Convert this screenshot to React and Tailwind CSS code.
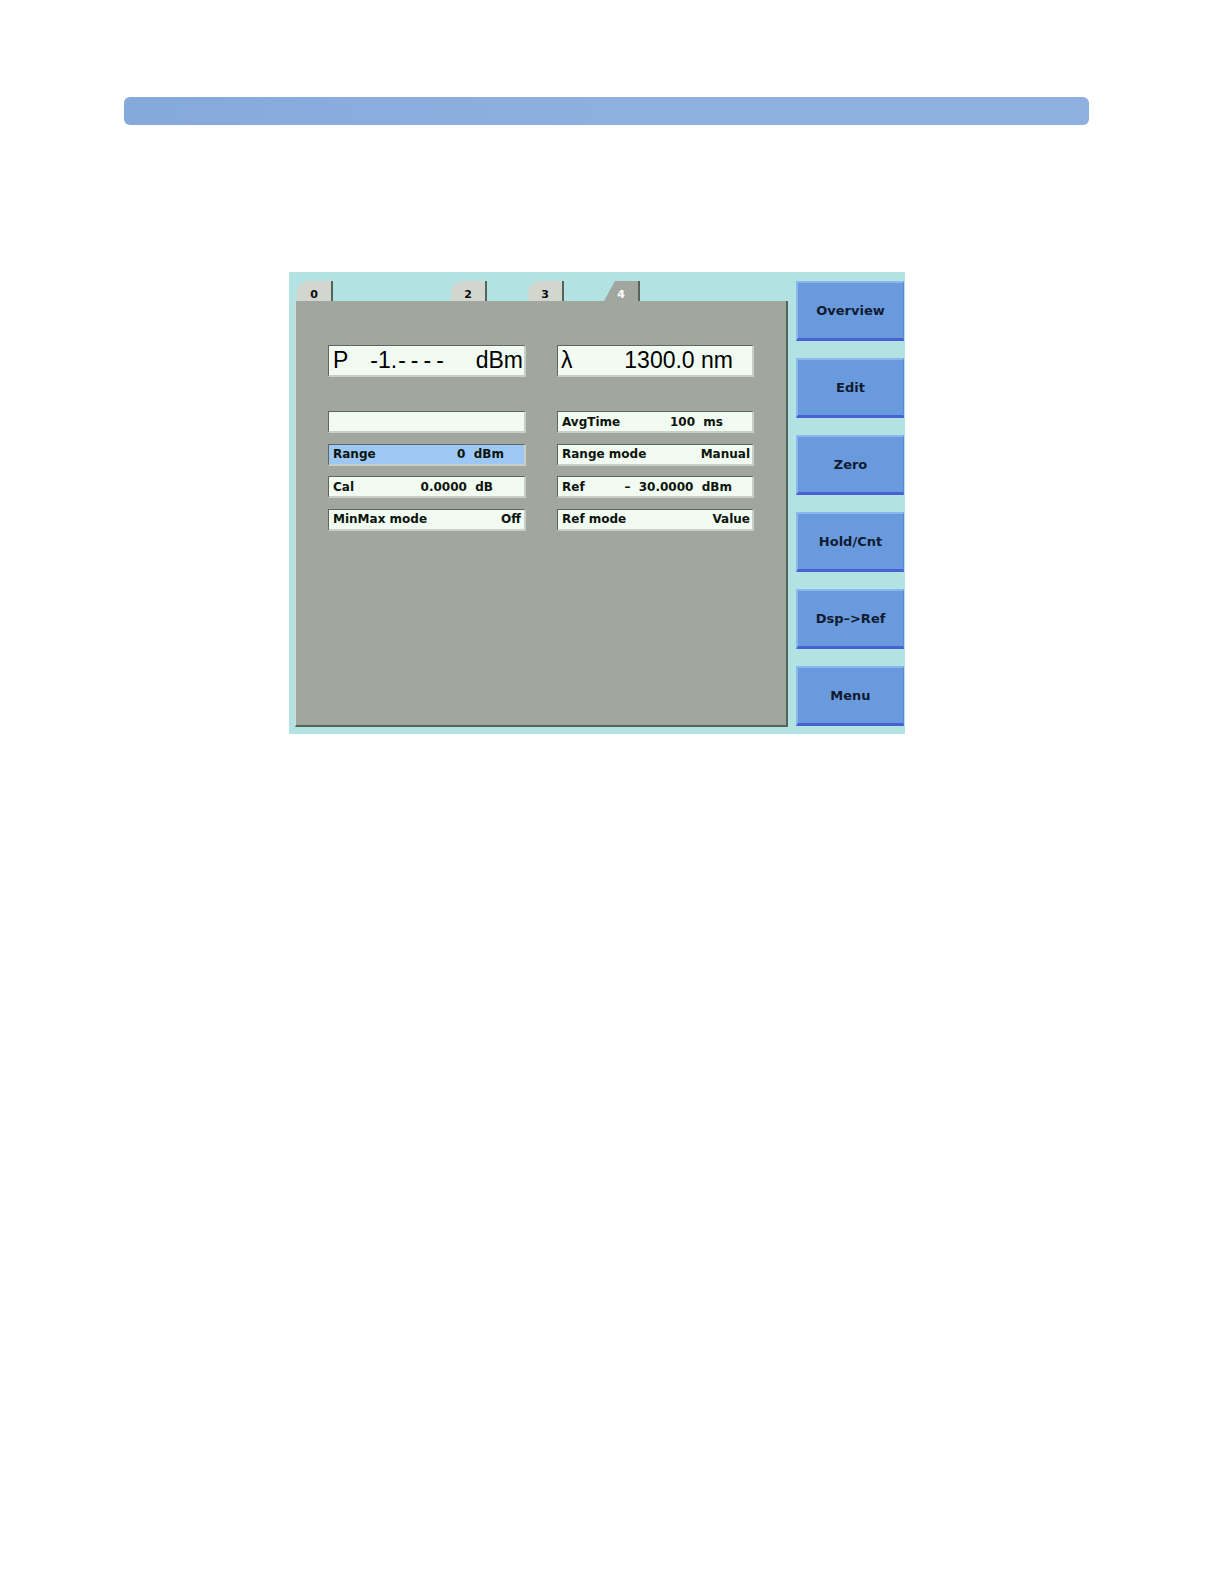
import React from "react";

const small = "font-['DejaVu_Sans',sans-serif] font-bold text-[12px] leading-none text-[#0c140c]";
const fieldEdges =
  "flex items-center border-t border-l border-[#5e665e] border-b-2 border-r-2 border-b-[#c9cfc6] border-r-[#c9cfc6]";

function SmallField({ label, value, pr = "pr-[4px]", blue = false }) {
  return (
    <div className={`h-[22px] ${fieldEdges} ${blue ? "bg-[#9dc8f6]" : "bg-[#f2fbf2]"} pl-[4px] ${pr} ${small}`}>
      <span>{label}</span>
      <span className="ml-auto whitespace-pre">{value}</span>
    </div>
  );
}

function Tab({ label, active = false, className = "" }) {
  return (
    <div
      className={`w-[36px] h-[20px] flex items-end justify-center pb-[1px] border-r-2 border-[#56625c] font-['DejaVu_Sans',sans-serif] font-bold text-[11px] leading-none ${
        active
          ? "bg-[#a1a79f] text-white [clip-path:polygon(11px_0,100%_0,100%_100%,0_100%)]"
          : "bg-[#d3d5cf] text-[#0a0a0a] rounded-tl-[12px]"
      } ${className}`}
    >
      {label}
    </div>
  );
}

function Btn({ label }) {
  return (
    <div className="w-[108px] h-[60px] flex items-center justify-center bg-[#6a9ade] border-t-2 border-l-2 border-[#8cb6ee] border-b-[3px] border-b-[#4862d6] border-r border-r-[#5a86d4] font-['DejaVu_Sans',sans-serif] font-bold text-[13px] leading-none text-[#111b30]">
      {label}
    </div>
  );
}

export default function App() {
  return (
    <div className="w-[1222px] min-h-[1582px] bg-white">
      <div className="pt-[97px] pl-[124px]">
        <div className="w-[965px] h-[28px] rounded-[6px] bg-gradient-to-r from-[#86a9dc] via-[#8eb0e0] to-[#8eb0e0]" />
      </div>

      <div className="mt-[147px] ml-[289px] w-[616px] h-[462px] bg-[#b2e2e2] flex">
        <div className="pl-[6px] pt-[9px] flex flex-col">
          <div className="flex h-[20px] pl-[2px]">
            <Tab label="0" />
            <Tab label="2" className="ml-[118px]" />
            <Tab label="3" className="ml-[41px]" />
            <Tab label="4" active className="ml-[40px]" />
          </div>
          <div className="w-[493px] h-[426px] bg-[#a1a79f] border-l border-l-[#d6dcd2] border-r-2 border-r-[#56625c] border-b-2 border-b-[#56625c] pl-[32px] pt-[44px]">
            <div className="grid grid-cols-[198px_197px] gap-x-[31px]">
              <div className={`h-[32px] ${fieldEdges} bg-[#f2fbf2] pl-[4px] pr-[1px] font-['Liberation_Sans',Arial,sans-serif] text-[23px] leading-none text-black`}>
                <span>P</span>
                <span className="ml-[22px]">-1.</span>
                <span className="tracking-[5px] ml-[1px]">----</span>
                <span className="ml-auto">dBm</span>
              </div>
              <div className={`h-[32px] ${fieldEdges} bg-[#f2fbf2] pl-[3px] pr-[19px] font-['Liberation_Sans',Arial,sans-serif] text-[23px] leading-none text-black`}>
                <span>λ</span>
                <span className="ml-auto">1300.0 nm</span>
              </div>
            </div>

            <div className="mt-[34px] grid grid-cols-[198px_197px] gap-x-[31px] gap-y-[10.5px]">
              <div className={`h-[22px] ${fieldEdges} bg-[#f2fbf2]`} />
              <SmallField label="AvgTime" value="100  ms" pr="pr-[29px]" />
              <SmallField label="Range" value="0  dBm" pr="pr-[20px]" blue />
              <SmallField label="Range mode" value="Manual" pr="pr-[2px]" />
              <SmallField label="Cal" value="0.0000  dB" pr="pr-[31px]" />
              <SmallField label="Ref" value="–  30.0000  dBm" pr="pr-[20px]" />
              <SmallField label="MinMax mode" value="Off" pr="pr-[3px]" />
              <SmallField label="Ref mode" value="Value" pr="pr-[2px]" />
            </div>
          </div>
        </div>

        <div className="ml-[8px] pt-[9px] flex flex-col gap-[17px]">
          <Btn label="Overview" />
          <Btn label="Edit" />
          <Btn label="Zero" />
          <Btn label="Hold/Cnt" />
          <Btn label="Dsp–>Ref" />
          <Btn label="Menu" />
        </div>
      </div>
    </div>
  );
}
